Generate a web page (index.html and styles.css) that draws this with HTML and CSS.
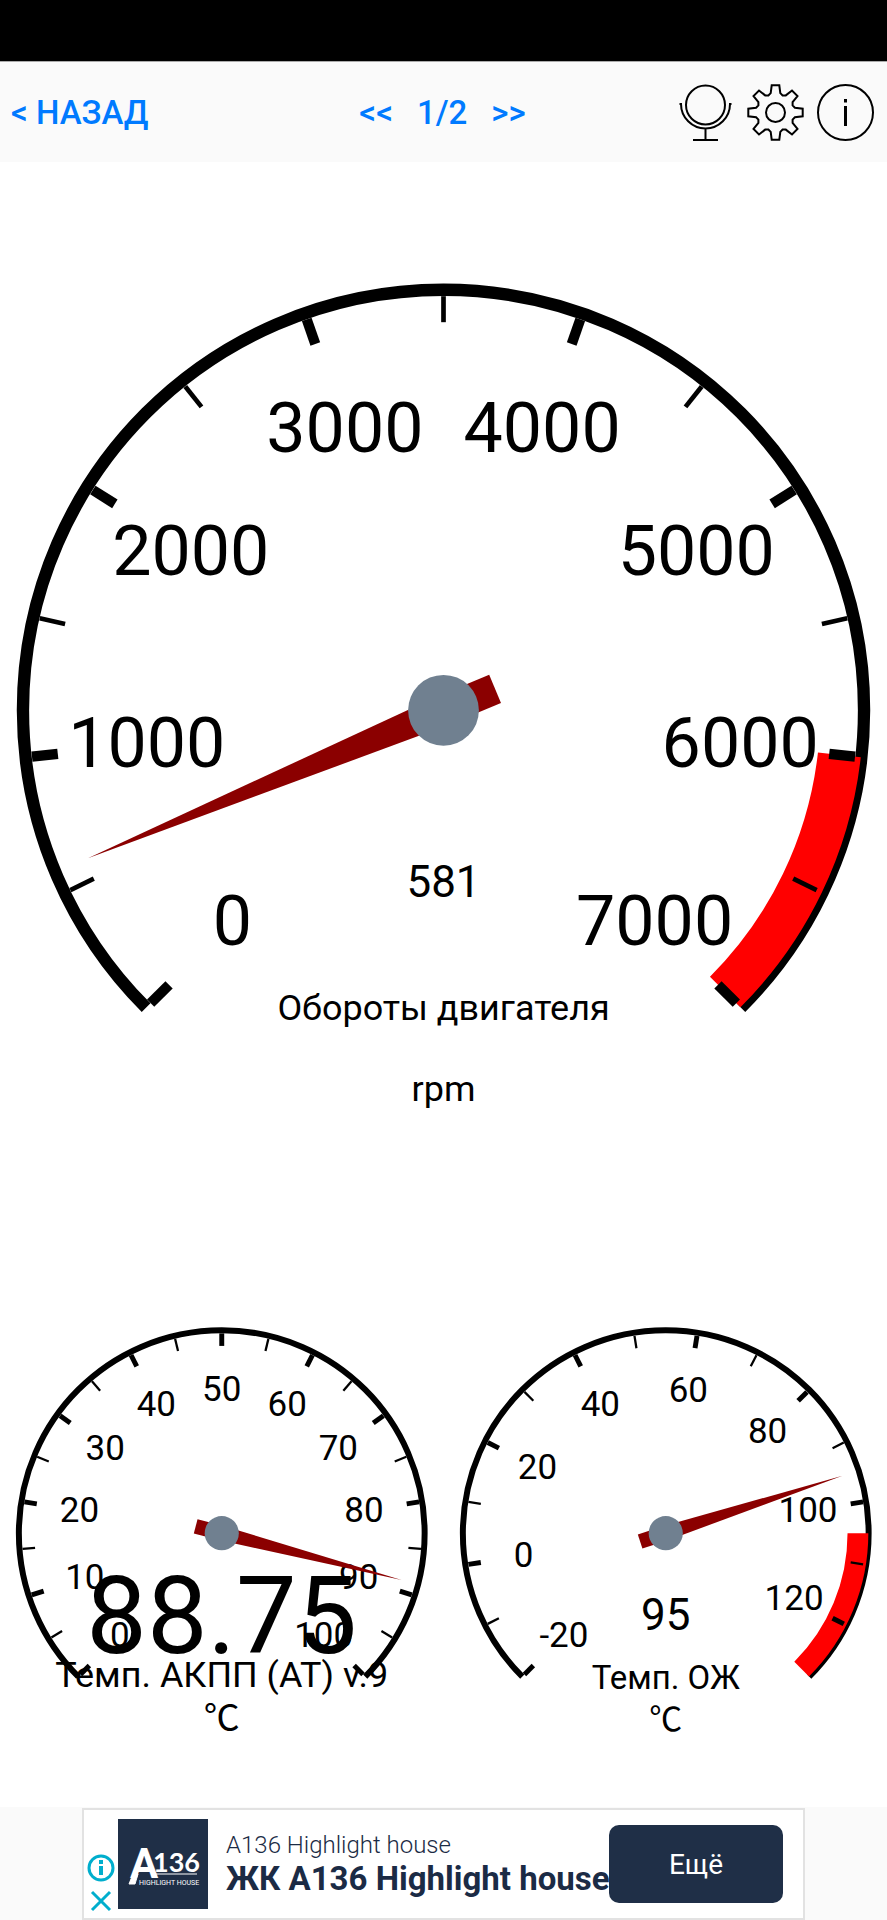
FILE: index.html
```html
<!DOCTYPE html>
<html lang="ru">
<head>
  <meta charset="UTF-8">
  <title>Обороты двигателя</title>
  <meta name="viewport" content="width=device-width, initial-scale=1.0">
  <link rel="stylesheet" href="styles.css">
</head>
<body>

  <div class="status-bar"></div>

  <header class="toolbar">
    <a class="back" href="#">&lt; НАЗАД</a>
    <nav class="pager">
      <button type="button" aria-label="Предыдущая">&lt;&lt;</button>
      <span>1/2</span>
      <button type="button" aria-label="Следующая">&gt;&gt;</button>
    </nav>
    <div class="tools">
      <button type="button" aria-label="Микрофон">
        <svg class="icon" viewBox="0 0 57 57">
          <circle cx="28.500" cy="21" r="19.500"/>
          <path d="M2.500 20 H5 M52 20 H54.500 M4 20 A24.500 24.500 0 0 0 53 20 M28.500 45 V56 M16 56 H41"/>
        </svg>
      </button>
      <button type="button" aria-label="Настройки">
        <svg class="icon" viewBox="0 0 57 57">
          <circle cx="28.500" cy="28.500" r="9.500"/>
          <path id="gear" d=""/>
        </svg>
      </button>
      <button type="button" aria-label="Информация">
        <svg class="icon" viewBox="0 0 57 57">
          <circle cx="28.500" cy="28.500" r="27.500"/>
          <path class="thick" d="M28.500 15 V18.500 M28.500 22 V42"/>
        </svg>
      </button>
    </div>
  </header>

  <main class="gauges">
    <svg class="gauge wide" id="rpm" viewBox="-444 -545 888 1090"></svg>
    <svg class="gauge" id="atf" viewBox="-222 -272 444 544"></svg>
    <svg class="gauge" id="coolant" viewBox="-222 -272 444 544"></svg>
  </main>

  <footer class="ad-bar">
    <div class="ad">
      <div class="ad-marks">
        <svg class="mark" viewBox="0 0 28 28">
          <circle cx="14" cy="14" r="12"/>
          <path class="bold" d="M14 6 V10 M14 12 V21"/>
        </svg>
        <svg class="mark" viewBox="0 0 28 28">
          <path d="M5 5 L23 23 M23 5 L5 23"/>
        </svg>
      </div>
      <svg class="logo" viewBox="0 0 90 90">
        <rect width="90" height="90"/>
        <text class="logo-a" x="12" y="59">A</text>
        <text class="logo-num" x="35" y="53">136</text>
        <path d="M36 55 H79 M11 65 L15 55 H20 L17 65 Z"/>
        <text class="logo-sub" x="21" y="66">HIGHLIGHT HOUSE</text>
      </svg>
      <div class="ad-text">
        <span class="ad-brand">A136 Highlight house</span>
        <a class="ad-title" href="#">ЖК А136 Highlight house</a>
      </div>
      <button type="button" class="ad-more">Ещё</button>
    </div>
  </footer>

  <script src="gauges.js"></script>
</body>
</html>
```

FILE: styles.css
```css
* {
  box-sizing: border-box;
}
body {
  margin: 0;
  min-height: 100vh;
  display: flex;
  flex-direction: column;
  background: #fff;
  color: #000;
  font-family: Roboto, "Noto Sans CJK SC", sans-serif;
}
button {
  padding: 0;
  border: none;
  background: none;
  color: inherit;
  font: inherit;
  cursor: pointer;
}
a {
  color: inherit;
  text-decoration: none;
}

/* top */
.status-bar {
  height: 62px;
  background: #000;
  border-bottom: 1px solid #aaa;
}
.toolbar {
  display: grid;
  grid-template-columns: 1fr auto 1fr;
  align-items: center;
  height: 100px;
  padding: 0 13px 0 11px;
  background: #fafafa;
  color: #007aff;
  font-size: 33px;
  font-weight: 500;
}
.pager {
  display: flex;
  gap: 24px;
}
.tools {
  display: flex;
  justify-content: flex-end;
  gap: 13px;
}
.icon {
  display: block;
  width: 57px;
  height: 57px;
  fill: none;
  stroke: #000;
  stroke-width: 2;
}
.icon .thick {
  stroke-width: 3;
}

/* gauges */
.gauges {
  flex: 1;
  display: grid;
  grid-template-columns: 1fr 1fr;
  grid-template-rows: 2fr 1fr;
}
.gauge {
  display: block;
  width: 100%;
  height: 100%;
  min-height: 0;
  overflow: visible;
}
.wide {
  grid-column: 1 / 3;
}
.gauge text {
  text-anchor: middle;
}
.rim, .tick {
  fill: none;
  stroke: #000;
}
.zone {
  fill: none;
  stroke: #f00;
}
.needle {
  fill: #8b0000;
}
.hub {
  fill: #708090;
}

/* ad */
.ad-bar {
  padding: 1px 82px 0;
  background: #fafafa;
}
.ad {
  display: flex;
  align-items: center;
  height: 112px;
  padding-right: 20px;
  border: 2px solid #e2e2e2;
  background: #fff;
  color: #1b2b45;
}
.ad-marks {
  align-self: flex-end;
  display: flex;
  flex-direction: column;
  gap: 5px;
  padding: 0 3px 3px;
}
.mark {
  display: block;
  width: 28px;
  height: 28px;
  fill: none;
  stroke: #00aecd;
  stroke-width: 3;
}
.mark .bold {
  stroke-width: 4;
}
.logo {
  width: 90px;
  height: 90px;
  margin-right: 18px;
  fill: #fff;
  stroke: none;
}
.logo rect {
  fill: #1f2f47;
}
.logo path {
  stroke: #fff;
  stroke-width: 1;
}
.logo-a {
  font-size: 42px;
  font-weight: 700;
}
.logo-num {
  font-family: Lato, sans-serif;
  font-size: 27px;
  font-weight: 700;
}
.logo-sub {
  font-size: 7px;
}
.ad-text {
  flex: 1;
  display: flex;
  flex-direction: column;
  min-width: 0;
  white-space: nowrap;
}
.ad-brand {
  font-size: 24px;
  font-weight: 300;
  line-height: 30px;
}
.ad-title {
  font-size: 33px;
  font-weight: 700;
  line-height: 38px;
}
.ad-more {
  width: 174px;
  height: 78px;
  border-radius: 10px;
  background: #1f2f47;
  color: #fff;
  font-size: 28px;
}
```

FILE: gauges.js
```js
const START = 135;
const SWEEP = 270;

const gauges = [
  {
    id: "rpm", r: 427, min: 0, max: 7000, major: 1000, minor: 500,
    redFrom: 6000, value: 581, labelSize: 70, valueSize: 44, valueY: 187,
    title: "Обороты двигателя", titleSize: 36, titleY: 310, unit: "rpm", unitY: 391
  },
  {
    id: "atf", r: 206, min: 0, max: 100, major: 10, minor: 5,
    value: 88.75, labelSize: 35, valueSize: 108, valueY: 120,
    title: "Темп. АКПП (АТ) v.9", titleSize: 36, titleY: 154, unit: "℃", unitY: 198
  },
  {
    id: "coolant", r: 206, min: -20, max: 130, major: 20, minor: 10,
    redFrom: 105, value: 95, labelSize: 35, valueSize: 44, valueY: 97,
    title: "Темп. ОЖ", titleSize: 33, titleY: 156, unit: "℃", unitY: 198
  }
];

function point(r, deg) {
  const a = deg * Math.PI / 180;
  return (r * Math.cos(a)).toFixed(2) + " " + (r * Math.sin(a)).toFixed(2);
}

function arc(cls, r, from, to, width) {
  const large = to - from > 180 ? 1 : 0;
  return `<path class="${cls}" stroke-width="${width}" d="M${point(r, from)} A${r} ${r} 0 ${large} 1 ${point(r, to)}"/>`;
}

function text(str, x, y, size) {
  return `<text x="${x}" y="${y}" font-size="${size}">${str}</text>`;
}

function drawGauge(g) {
  const R = g.r;
  const angle = v => START + (v - g.min) / (g.max - g.min) * SWEEP;
  let out = arc("rim", R * 0.986, START, START + SWEEP, R * 0.029);

  if (g.redFrom !== undefined) {
    out += arc("zone", R * 0.934, angle(g.redFrom), START + SWEEP, R * 0.101);
  }

  for (let v = g.min; v <= g.max; v += g.minor) {
    const isMajor = (v - g.min) % g.major === 0;
    if (!isMajor && v + g.minor > g.max) continue;
    const a = angle(v);
    out += `<path class="tick" stroke-width="${R * (isMajor ? 0.024 : 0.011)}" d="M${point(R * 0.971, a)} L${point(R * 0.91, a)}"/>`;
    if (isMajor) {
      const [x, y] = point(R * 0.7, a).split(" ");
      out += text(v, x, Number(y) + g.labelSize * 0.33, g.labelSize);
    }
  }

  out += text(g.value, 0, g.valueY, g.valueSize);
  out += text(g.title, 0, g.titleY, g.titleSize);
  out += text(g.unit, 0, g.unitY, g.titleSize);

  const w = R * 0.036;
  out += `<path class="needle" transform="rotate(${angle(g.value)})" d="M${-R * 0.131} ${-w} H0 L${R * 0.903} 0 L0 ${w} H${-R * 0.131} Z"/>`;
  out += `<circle class="hub" r="${R * 0.083}"/>`;
  document.getElementById(g.id).innerHTML = out;
}

// eight teeth around the settings icon
function drawGear() {
  const c = 28.5;
  const pts = [];
  for (let i = 0; i < 8; i++) {
    const mid = i * 45;
    [[20, -14], [27.5, -8], [27.5, 8], [20, 14], [18.5, 22.5]].forEach(([r, d]) => {
      const a = (mid + d) * Math.PI / 180;
      pts.push((c + r * Math.cos(a)).toFixed(1) + " " + (c + r * Math.sin(a)).toFixed(1));
    });
  }
  document.getElementById("gear").setAttribute("d", "M" + pts.join(" L") + " Z");
}

gauges.forEach(drawGauge);
drawGear();
```
